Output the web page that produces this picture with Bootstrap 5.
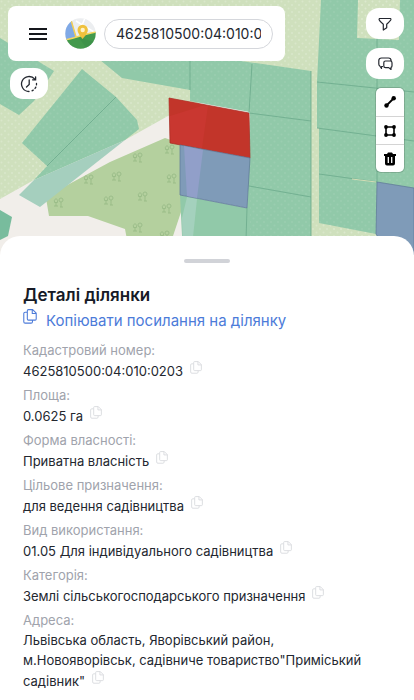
<!DOCTYPE html>
<html lang="uk">
<head>
<meta charset="utf-8">
<meta name="viewport" content="width=device-width, initial-scale=1">
<title>Деталі ділянки</title>
<link href="https://cdn.jsdelivr.net/npm/bootstrap@5.3.0/dist/css/bootstrap.min.css" rel="stylesheet">
<style>
body { font-family: Inter, "Noto Sans", sans-serif; font-size: 13px; line-height: 20px; color: #23272f; background: #fff; }
.map-area { min-height: 256px; background: #f1eeea; }
.map-canvas { z-index: 0; }
.map-ui { padding: 6px 10px 0 8px; }
.search-panel { border-radius: 8px; padding: 12px 12px 12px 20px; gap: 8px; }
.menu-btn { margin-right: 8px; }
.search-field { width: 169px; height: 30px; border: 1px solid #d5d7dc; border-radius: 15px; padding: 0 11px; font-size: 14px; line-height: 20px; color: #23272f; }
.pill { width: 38px; height: 31px; border-radius: 13px; background: #fff; border: 0; color: #23272f; }
.left-tools .pill { margin-left: 2px; }
.tool-stack { width: 28px; border-radius: 5px; box-shadow: 0 0 0 1px #00000026; }
.tool { height: 28px; background: #fff; border: 0; color: #000; }
.tool + .tool { border-top: 1px solid #d4d4d4; }
.right-tools { gap: 9px; padding-top: 2px; }
.left-tools { gap: 7px; }
.sheet { margin-top: -20px; border-radius: 20px 20px 0 0; padding: 23px 36px 8px 23px; }
.grip { width: 46px; height: 4px; border-radius: 2px; background: #d1d3d8; }
.grip-row { margin-right: -13px; }
.sheet-title { font-size: 17px; line-height: 24px; font-weight: 600; margin: 20px 0 0; color: #161a26; }
.share-link { font-size: 15px; line-height: 28px; color: #4c7bd9; gap: 9px; }
.share-link svg { margin-top: 2px; }
.details { margin: 5px 0 0; }
.details dt { font-weight: 400; color: #a0a3ac; }
.details dd { margin: 0; }
.copy-btn { border: 0; background: none; padding: 1px 0 11px; margin-left: 3px; line-height: 0; vertical-align: 2px; color: #d9dbde; }
.copy-btn svg { vertical-align: baseline; }
</style>
<script src="https://cdn.jsdelivr.net/npm/bootstrap@5.3.0/dist/js/bootstrap.bundle.min.js"></script>
</head>
<body>
<svg class="d-none" aria-hidden="true">
  <symbol id="copy" viewBox="0 0 13 14"><path fill="none" stroke="currentColor" stroke-linejoin="round" d="M5 .6h4l3.300 3.300v5.500q0 1-1 1H5q-1 0-1-1V1.600q0-1 1-1zM8.600.8v3.400h3.500M3.800 3H2Q.7 3 .7 4.200v7.600Q.7 13.200 2 13.200h5.500q1.300 0 1.300-1.300v-1.300"/></symbol>
</svg>

<section class="map-area position-relative overflow-hidden">
  <svg class="map-canvas position-absolute top-0 start-0 w-100 h-100" viewBox="0 0 414 256" preserveAspectRatio="xMidYMin slice" aria-hidden="true">
    <defs>
      <pattern id="dots" width="7" height="7" patternUnits="userSpaceOnUse"><circle cx="1.500" cy="1.500" r="1" fill="#fff" opacity=".2"/><circle cx="5" cy="5" r="1" fill="#fff" opacity=".2"/></pattern>
      <g id="tree" fill="none" stroke="#98bb87" stroke-width=".9"><path d="M2 9V5M.5 5.500Q-.5 3 2 1.500 4.500 3 3.500 5.500zM7 10V5M4 9h-4M9 10H6"/><circle cx="7" cy="3" r="2"/></g>
    </defs>
    <path fill="#cfe0bd" d="M0 0h414v256H250V98H208L168 116 125 140 34 180 0 199z"/>
    <path fill="url(#dots)" d="M0 0h414v256H250V98H208L168 116 125 140 34 180 0 199z"/>
    <path fill="#b4d09e" d="M46 198L60 189 110 162 165 138 180 143 184 203 170 245H128L125 229 88 216H49z"/>
    <g fill="#91c9a9">
      <path d="M0 38L54 71 34 101 19 115 0 104z"/>
      <path d="M82 69L116 97 137 120 139 129 125 140 34 180 47 166 22 143z"/>
      <path d="M100 60L122 78 190 90V101L250 112 311 120V71L234 60z"/>
      <path d="M250 112H311V256H183L180 195 247 208z"/>
      <path d="M321 0H358L357 38 399 40 400 0H414V256H386L376 234 319 223V128H317V82z"/>
    </g>
    <path fill="#a5cfbe" d="M125 140L40 207 19 195 34 180z"/>
    <path fill="#78bc9d" d="M0 210L12 217 8 236 0 240z"/>
    <path fill="#a4d1bd" d="M187 197l10 2-6 57h-8l-1-38z"/>
    <path fill="url(#dots)" opacity=".4" d="M0 38L54 71 19 115 0 104zM82 69L137 120 139 129 34 180 22 143zM100 60H234L311 71V256H250V112L190 100V90zM321 0H414V256H386L319 223V82z"/>
    <path fill="#c93730" stroke="#a32920" stroke-width=".7" d="M169 98L249 113 250 158 170 143z"/>
    <path fill="#c2352a" d="M169.500 98.500L205 105 170 116zM208 106L248.500 113.500 249.500 157 202 148.500z"/>
    <path fill="#7f9bb8" stroke="#5b7597" stroke-width=".7" d="M180 145L250 158 247 208 180 195z"/>
    <path fill="#919fc9" d="M184 146l19 4-6 48-10-2z"/>
    <path fill="#7f9bb8" stroke="#5b7597" stroke-width=".7" d="M377 182L414 188V256H390L376 234z"/>
    <path fill="none" stroke="#6ba98b" stroke-width=".8" d="M190 60V90M252 64L249 113 311 121M249 186L311 197M247 208L246 240M116 97L47 166M317 82L414 92M317 128L414 141M319 174L377 182M377 38V182M311 71V240"/>
    <path stroke="#d5dfb7" d="M352 179l24 3"/>
    <use href="#tree" x="133" y="152"/><use href="#tree" x="165" y="144"/><use href="#tree" x="112" y="171"/><use href="#tree" x="84" y="174"/><use href="#tree" x="167" y="173"/><use href="#tree" x="54" y="197"/><use href="#tree" x="104" y="195"/><use href="#tree" x="138" y="191"/><use href="#tree" x="162" y="203"/><use href="#tree" x="133" y="222"/><use href="#tree" x="160" y="230"/>
  </svg>

  <div class="map-ui position-relative d-flex justify-content-between align-items-start">
    <div class="left-tools d-flex flex-column align-items-start">
      <form class="search-panel bg-white d-flex align-items-center">
        <button type="button" class="menu-btn btn p-0 border-0 d-flex" aria-label="Меню">
          <svg width="21" height="14" viewBox="0 0 21 14" stroke="#15171c" stroke-width="2"><path d="M1 2h18M1 7h18M1 12h18"/></svg>
        </button>
        <a href="#" class="d-flex" aria-label="Головна">
          <svg width="31" height="31" viewBox="0 0 31 31">
            <defs><clipPath id="disc"><circle cx="15.500" cy="15.500" r="15.200"/></clipPath></defs>
            <g clip-path="url(#disc)">
              <path fill="#eceef0" d="M0 0h31v31H0z"/><path fill="#80a9e6" d="M0 0h6l5 20L0 23z"/>
              <path fill="none" stroke="#f4cf55" stroke-width="1.500" d="M6 2l5 17"/>
              <path stroke="#fff" stroke-width="1.500" d="M11 3l20 12M20 0l-5 12"/>
              <path fill="#43994c" d="M0 22q9-2 15-4t16-4v17H0z"/><path fill="none" stroke="#f4d660" stroke-width="1.500" d="M0 22q9-2 15-4t16-4"/>
              <path fill="#318641" d="M14 20l17 4-9 7z" opacity=".3"/>
            </g>
            <path fill="#efc13d" d="M17.500 21q-5-6-5-9a5.200 5.200 0 0110.400 0q0 3-5.400 9z"/><circle cx="17.700" cy="12" r="2.200" fill="#fff3c8"/>
          </svg>
        </a>
        <input class="search-field" type="text" value="4625810500:04:010:0203" aria-label="Кадастровий номер">
      </form>
      <button type="button" class="pill d-flex align-items-center justify-content-center" aria-label="Історія">
        <svg width="18" height="18" viewBox="0 0 18 18" fill="none" stroke="currentColor" stroke-width="1.300" stroke-linecap="round"><path d="M9 16.500A7.500 7.500 0 1114.800 4.200M15.600 1.800v3h-3M9.200 5v4.500L6.500 12"/><path stroke-dasharray="1.500 2.200" d="M16.500 8.500A7.500 7.500 0 0111 16.200"/></svg>
      </button>
    </div>
    <div class="right-tools d-flex flex-column align-items-end">
      <button type="button" class="pill d-flex align-items-center justify-content-center" aria-label="Фільтр">
        <svg width="14" height="14" viewBox="0 0 14 14" fill="none" stroke="currentColor" stroke-width="1.200" stroke-linejoin="round"><path d="M1.500 1.500h11q.6.300.4 1.200-.3 1-4.200 4.600v3.400L5.300 13V7.300Q1.300 3.700 1.100 2.600q-.1-.8.400-1.100z"/></svg>
      </button>
      <button type="button" class="pill d-flex align-items-center justify-content-center" aria-label="Чат">
        <svg width="15" height="14" viewBox="0 0 15 14" fill="none" stroke="currentColor" stroke-width="1.200" stroke-linejoin="round"><path d="M5 9.500H3.500v2L1.800 9Q.8 8.400.8 7V3.500Q.8 1 3.500 1h7q2.500 0 2.700 2.800M7.500 4h4.800Q14 4 14 5.800v2.900q0 1.300-1 1.700v2.100l-2.300-1.900H7.500Q5.800 10.600 5.800 9V5.800Q5.800 4 7.500 4z"/></svg>
      </button>
      <div class="tool-stack d-flex flex-column overflow-hidden" role="group" aria-label="Малювання">
        <button type="button" class="tool p-0 d-flex align-items-center justify-content-center" aria-label="Лінія"><svg width="14" height="14" viewBox="0 0 14 14"><path stroke="#000" stroke-width="1.800" d="M3 11l8-8"/><circle cx="3.500" cy="10.500" r="2.200"/><circle cx="10.700" cy="3.300" r="2.200"/></svg></button>
        <button type="button" class="tool p-0 d-flex align-items-center justify-content-center" aria-label="Полігон"><svg width="14" height="14" viewBox="0 0 14 14"><path fill="none" stroke="#000" stroke-width="1.600" d="M3 3h8v8H3z"/><circle cx="3" cy="3" r="1.900"/><circle cx="11" cy="3" r="1.900"/><circle cx="3" cy="11" r="1.900"/><circle cx="11" cy="11" r="1.900"/></svg></button>
        <button type="button" class="tool p-0 d-flex align-items-center justify-content-center" aria-label="Видалити"><svg width="14" height="14" viewBox="0 0 14 14"><path d="M1 2h3l1-1.500h4L10 2h3v2H1zM2 4h10v7.500q0 2-2 2H4q-2 0-2-2z"/><path stroke="#fff" stroke-width="1.300" d="M5.300 5V11M8.700 5V11"/></svg></button>
      </div>
    </div>
  </div>
</section>

<main class="sheet bg-white position-relative">
  <div class="grip-row"><div class="grip mx-auto"></div></div>
  <h1 class="sheet-title">Деталі ділянки</h1>
  <a href="#" class="share-link d-flex align-items-start text-decoration-none"><svg width="14" height="15"><use href="#copy"/></svg><span>Копіювати посилання на ділянку</span></a>
  <dl class="details">
    <dt>Кадастровий номер:</dt>
    <dd>4625810500:04:010:0203 <button type="button" class="copy-btn" aria-label="Копіювати номер"><svg width="12" height="13"><use href="#copy"/></svg></button></dd>
    <dt>Площа:</dt>
    <dd>0.0625 га <button type="button" class="copy-btn" aria-label="Копіювати площу"><svg width="12" height="13"><use href="#copy"/></svg></button></dd>
    <dt>Форма власності:</dt>
    <dd>Приватна власність <button type="button" class="copy-btn" aria-label="Копіювати форму власності"><svg width="12" height="13"><use href="#copy"/></svg></button></dd>
    <dt>Цільове призначення:</dt>
    <dd>для ведення садівництва <button type="button" class="copy-btn" aria-label="Копіювати призначення"><svg width="12" height="13"><use href="#copy"/></svg></button></dd>
    <dt>Вид використання:</dt>
    <dd>01.05 Для індивідуального садівництва <button type="button" class="copy-btn" aria-label="Копіювати вид використання"><svg width="12" height="13"><use href="#copy"/></svg></button></dd>
    <dt>Категорія:</dt>
    <dd>Землі сільськогосподарського призначення <button type="button" class="copy-btn" aria-label="Копіювати категорію"><svg width="12" height="13"><use href="#copy"/></svg></button></dd>
    <dt>Адреса:</dt>
    <dd>Львівська область, Яворівський район, м.Новояворівськ, садівниче товариство"Приміський садівник" <button type="button" class="copy-btn" aria-label="Копіювати адресу"><svg width="12" height="13"><use href="#copy"/></svg></button></dd>
  </dl>
</main>
</body>
</html>
